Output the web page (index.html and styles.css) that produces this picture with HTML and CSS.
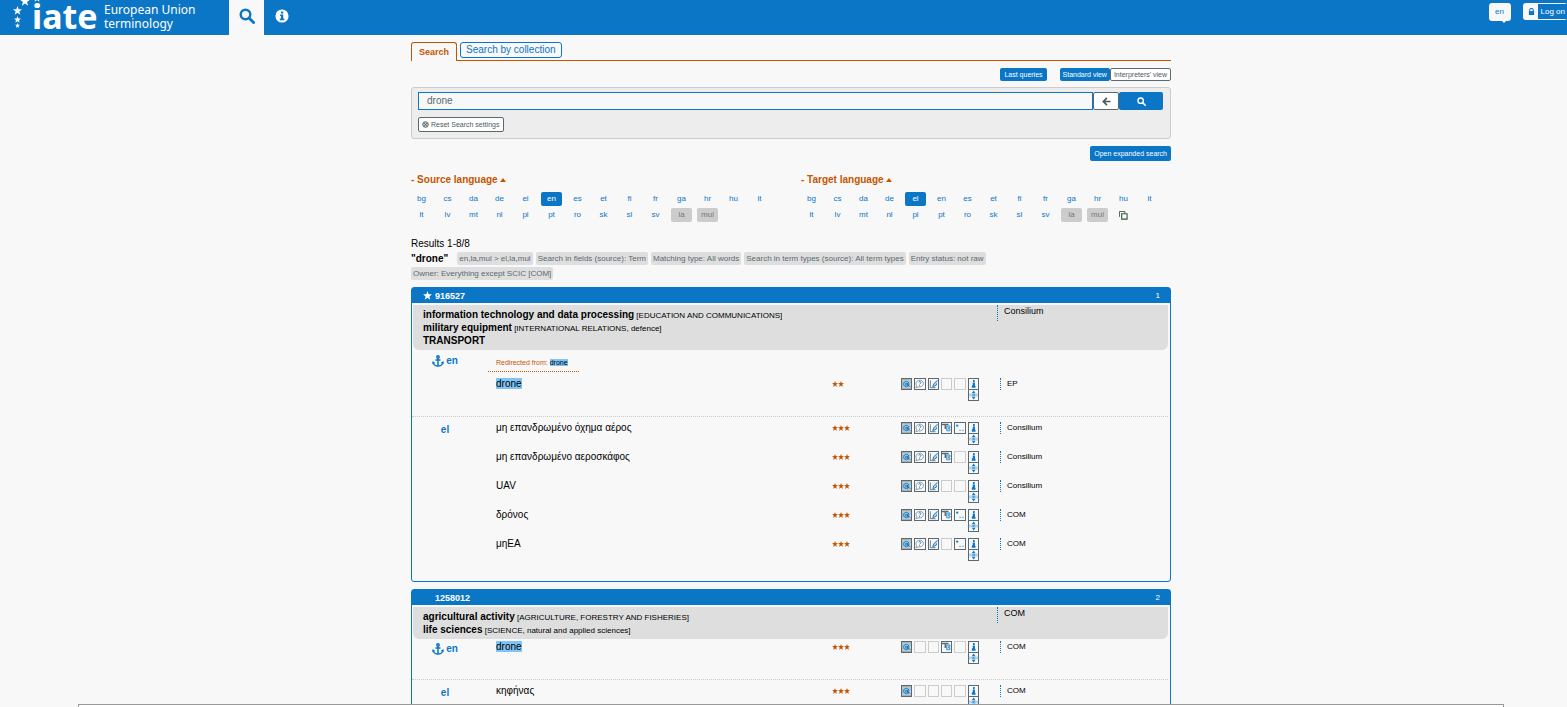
FILE: index.html
```html
<!DOCTYPE html>
<html lang="en">
<head>
  <meta charset="UTF-8">
  <title>IATE - European Union Terminology</title>
  <link rel="stylesheet" href="styles.css">
</head>
<body>
  <svg class="defs" aria-hidden="true">
    <symbol id="search" viewBox="0 0 16 16"><circle cx="6.5" cy="6.5" r="4.8" fill="none" stroke="currentColor" stroke-width="2.4"/><path d="M10 10l4.6 4.6" stroke="currentColor" stroke-width="2.8" stroke-linecap="round"/></symbol>
    <symbol id="star" viewBox="0 0 10 10"><path d="M5 0l1.3 3.5L10 3.7 7.1 6 8.1 9.8 5 7.6 1.9 9.8 2.9 6 0 3.7l3.7-.2z" fill="currentColor"/></symbol>
    <symbol id="anchor" viewBox="0 0 12 12"><g fill="none" stroke="currentColor" stroke-width="1.5"><circle cx="6" cy="2" r="1.2"/><path d="M6 3.3V11M3.5 5h5M1.3 7.5C1.6 9.8 3.6 11 6 11s4.4-1.2 4.7-3.5"/></g><path d="M0 8.8L.7 6l2.5 1.9zM12 8.8L11.3 6 8.8 7.9z" fill="currentColor"/></symbol>
    <symbol id="def" viewBox="0 0 10 10"><path d="M0 0h10v10H0z" fill="#d3dade"/><path d="M0 .5h10M0 9.5h10M0 3h2M0 5h2M0 7h2M8 3h2M7 7.5h3" stroke="#8a9599"/><circle cx="4.7" cy="5" r="2.9" fill="#b6d8ee" stroke="#0b76c6"/><path d="M4 4.2h2v2H4zM6 4v2.5h2" fill="none" stroke="#0b76c6"/></symbol>
    <symbol id="context" viewBox="0 0 10 10"><path d="M1 9l.7-2.5A4 3.6 0 1 1 4 8z" fill="#fff" stroke="#8a9599"/><path d="M4 3.5C4 2 6.5 2 6.3 3.6 6.2 4.6 5 4.5 5 5.5M5 6.3v1" fill="none" stroke="#0b76c6"/></symbol>
    <symbol id="note" viewBox="0 0 10 10"><path d="M1.5 1v8H7" fill="none" stroke="#8a9599" stroke-width="1.3"/><path d="M4 8l1-3 3.5-4 .8 1L8 6z" fill="#b6d8ee"/><path d="M4 8l1-3 4-4M4.5 8L8 6V4.5" fill="none" stroke="#0b76c6"/></symbol>
    <symbol id="tref" viewBox="0 0 10 10"><path d="M0 1.2h7M3.5 1.5V6" stroke="#5a6a70" stroke-width="1.5"/><path d="M5 2.8h3.5v2L6.5 5.2l2 .8v2H5z" fill="#b6d8ee" stroke="#3b93d2"/></symbol>
    <symbol id="usage" viewBox="0 0 10 10"><path d="M1 1.5h2.5v2H1.5z" fill="#0b76c6"/><path d="M4.5 7.5h2M7.5 7.5h2" stroke="#5aa3d8"/></symbol>
    <symbol id="info" viewBox="0 0 10 10"><path d="M4.3 .8h1.8v2H4.3zM4 3.3h2.4V7H7v2H3V7l1-.8z" fill="#0b76c6"/></symbol>
    <symbol id="expand" viewBox="0 0 10 10"><path d="M0 5h10" stroke="#b6d8ee" stroke-width="3"/><path d="M5 .3L7 3H3zM5 9.7L3 7h4z" fill="#0b76c6"/><path d="M3.5 5h3" stroke="#3b93d2" stroke-width="1.5"/></symbol>
  </svg>

  <header class="topbar">
    <a class="logo" href="#">
      <svg class="logo-stars" viewBox="0 0 30 30" aria-hidden="true">
        <use href="#star" x="7" y="-4" width="10" height="10"/>
        <use href="#star" x="20" y="-6" width="8" height="8"/>
        <use href="#star" x="0" y="6" width="9" height="9"/>
        <use href="#star" x="1" y="16" width="7" height="7"/>
        <use href="#star" x="2" y="23" width="5" height="5"/>
      </svg>
      <span class="logo-name">iate</span>
      <span class="logo-text">European Union<br>terminology</span>
    </a>
    <nav class="topnav">
      <a class="active" href="#" aria-label="Search"><svg><use href="#search"/></svg></a>
      <a href="#" aria-label="Information"><svg viewBox="0 0 16 16"><circle cx="8" cy="8" r="7.5" fill="currentColor"/><path d="M6.8 2.8h2.6v2.3H6.8zM5.8 6.2h3.6v4.7h1.2v2H5.6v-2h1.2V8h-1z" fill="#0b76c6"/></svg></a>
    </nav>
    <div class="account">
      <button class="lang-bubble">en</button>
      <button class="logon"><svg viewBox="0 0 8 8" aria-hidden="true"><path d="M2 4V2.5a2 2 0 0 1 4 0V4" fill="none" stroke="currentColor" stroke-width="1.2"/><path d="M1 3.5h6V8H1z" fill="currentColor"/></svg><span>Log on</span></button>
    </div>
  </header>

  <main class="page">
    <nav class="tabs">
      <a class="tab current" href="#">Search</a>
      <a class="tab" href="#">Search by collection</a>
    </nav>

    <div class="views">
      <button class="btn">Last queries</button>
      <div class="switch">
        <button class="btn">Standard view</button>
        <button class="btn light">Interpreters' view</button>
      </div>
    </div>

    <form class="search-box">
      <div class="search-line">
        <input type="text" value="drone" aria-label="Search term">
        <button type="button" class="back" aria-label="Back"><svg viewBox="0 0 10 10"><path d="M9.5 5H2M5.5 1L1.5 5l4 4" fill="none" stroke="currentColor" stroke-width="1.9"/></svg></button>
        <button type="button" class="go" aria-label="Search"><svg><use href="#search"/></svg></button>
      </div>
      <button type="button" class="btn light reset"><svg viewBox="0 0 8 8" aria-hidden="true"><circle cx="4" cy="4" r="3.2" fill="#c3c9cb" stroke="currentColor"/><path d="M2.5 2.5l3 3M5.5 2.5l-3 3" stroke="currentColor"/></svg>Reset Search settings</button>
    </form>

    <div class="expanded">
      <button class="btn">Open expanded search</button>
    </div>

    <div class="languages">
      <section>
        <h2>- Source language <span class="caret"></span></h2>
        <div class="lang-list">
          <button>bg</button><button>cs</button><button>da</button><button>de</button><button>el</button><button class="on">en</button><button>es</button><button>et</button><button>fi</button><button>fr</button><button>ga</button><button>hr</button><button>hu</button><button>it</button>
          <button>lt</button><button>lv</button><button>mt</button><button>nl</button><button>pl</button><button>pt</button><button>ro</button><button>sk</button><button>sl</button><button>sv</button><button class="off">la</button><button class="off">mul</button>
        </div>
      </section>
      <section>
        <h2>- Target language <span class="caret"></span></h2>
        <div class="lang-list">
          <button>bg</button><button>cs</button><button>da</button><button>de</button><button class="on">el</button><button>en</button><button>es</button><button>et</button><button>fi</button><button>fr</button><button>ga</button><button>hr</button><button>hu</button><button>it</button>
          <button>lt</button><button>lv</button><button>mt</button><button>nl</button><button>pl</button><button>pt</button><button>ro</button><button>sk</button><button>sl</button><button>sv</button><button class="off">la</button><button class="off">mul</button>
          <button aria-label="Copy languages"><svg class="copy" viewBox="0 0 10 10"><path d="M.5 6.5v-6h6v2" fill="none" stroke="#2c5a3c"/><path d="M3 3h6v6H3z" fill="#f8f8f8" stroke="#2c5a3c" stroke-width="1.2"/></svg></button>
        </div>
      </section>
    </div>

    <div class="summary">
      <p>Results 1-8/8</p>
      <div class="chips">
        <strong>"drone"</strong>
        <span>en,la,mul &gt; el,la,mul</span>
        <span>Search in fields (source): Term</span>
        <span>Matching type: All words</span>
        <span>Search in term types (source): All term types</span>
        <span>Entry status: not raw</span>
        <span>Owner: Everything except SCIC [COM]</span>
      </div>
    </div>

    <article class="entry">
      <header class="entry-bar">
        <svg><use href="#star"/></svg>
        <a href="#">916527</a>
        <span class="num">1</span>
      </header>
      <div class="domains">
        <div>
          <p><b>information technology and data processing</b> [EDUCATION AND COMMUNICATIONS]</p>
          <p><b>military equipment</b> [INTERNATIONAL RELATIONS, defence]</p>
          <p><b>TRANSPORT</b></p>
        </div>
        <div class="owner">Consilium</div>
      </div>

      <section class="lang-block first">
        <div class="redirect">Redirected from: <mark>drone</mark></div>
        <div class="row">
          <div class="lang up"><svg><use href="#anchor"/></svg>en</div>
          <div class="term"><mark>drone</mark></div>
          <div class="stars"><svg><use href="#star"/></svg><svg><use href="#star"/></svg></div>
          <div class="tools"><i><svg><use href="#def"/></svg></i><i><svg><use href="#context"/></svg></i><i><svg><use href="#note"/></svg></i><i class="none"></i><i class="none"></i><i><svg><use href="#info"/></svg></i><i class="more"><svg><use href="#expand"/></svg></i></div>
          <div class="org">EP</div>
        </div>
      </section>

      <section class="lang-block">
        <div class="row">
          <div class="lang">el</div>
          <div class="term">μη επανδρωμένο όχημα αέρος</div>
          <div class="stars"><svg><use href="#star"/></svg><svg><use href="#star"/></svg><svg><use href="#star"/></svg></div>
          <div class="tools"><i><svg><use href="#def"/></svg></i><i><svg><use href="#context"/></svg></i><i><svg><use href="#note"/></svg></i><i><svg><use href="#tref"/></svg></i><i><svg><use href="#usage"/></svg></i><i><svg><use href="#info"/></svg></i><i class="more"><svg><use href="#expand"/></svg></i></div>
          <div class="org">Consilium</div>
        </div>
        <div class="row">
          <div class="lang"></div>
          <div class="term">μη επανδρωμένο αεροσκάφος</div>
          <div class="stars"><svg><use href="#star"/></svg><svg><use href="#star"/></svg><svg><use href="#star"/></svg></div>
          <div class="tools"><i><svg><use href="#def"/></svg></i><i><svg><use href="#context"/></svg></i><i><svg><use href="#note"/></svg></i><i><svg><use href="#tref"/></svg></i><i class="none"></i><i><svg><use href="#info"/></svg></i><i class="more"><svg><use href="#expand"/></svg></i></div>
          <div class="org">Consilium</div>
        </div>
        <div class="row">
          <div class="lang"></div>
          <div class="term">UAV</div>
          <div class="stars"><svg><use href="#star"/></svg><svg><use href="#star"/></svg><svg><use href="#star"/></svg></div>
          <div class="tools"><i><svg><use href="#def"/></svg></i><i><svg><use href="#context"/></svg></i><i><svg><use href="#note"/></svg></i><i class="none"></i><i class="none"></i><i><svg><use href="#info"/></svg></i><i class="more"><svg><use href="#expand"/></svg></i></div>
          <div class="org">Consilium</div>
        </div>
        <div class="row">
          <div class="lang"></div>
          <div class="term">δρόνος</div>
          <div class="stars"><svg><use href="#star"/></svg><svg><use href="#star"/></svg><svg><use href="#star"/></svg></div>
          <div class="tools"><i><svg><use href="#def"/></svg></i><i><svg><use href="#context"/></svg></i><i><svg><use href="#note"/></svg></i><i><svg><use href="#tref"/></svg></i><i><svg><use href="#usage"/></svg></i><i><svg><use href="#info"/></svg></i><i class="more"><svg><use href="#expand"/></svg></i></div>
          <div class="org">COM</div>
        </div>
        <div class="row">
          <div class="lang"></div>
          <div class="term">μηΕΑ</div>
          <div class="stars"><svg><use href="#star"/></svg><svg><use href="#star"/></svg><svg><use href="#star"/></svg></div>
          <div class="tools"><i><svg><use href="#def"/></svg></i><i><svg><use href="#context"/></svg></i><i><svg><use href="#note"/></svg></i><i class="none"></i><i><svg><use href="#usage"/></svg></i><i><svg><use href="#info"/></svg></i><i class="more"><svg><use href="#expand"/></svg></i></div>
          <div class="org">COM</div>
        </div>
      </section>
    </article>

    <article class="entry">
      <header class="entry-bar">
        <svg></svg>
        <a href="#">1258012</a>
        <span class="num">2</span>
      </header>
      <div class="domains">
        <div>
          <p><b>agricultural activity</b> [AGRICULTURE, FORESTRY AND FISHERIES]</p>
          <p><b>life sciences</b> [SCIENCE, natural and applied sciences]</p>
        </div>
        <div class="owner">COM</div>
      </div>

      <section class="lang-block first">
        <div class="row">
          <div class="lang"><svg><use href="#anchor"/></svg>en</div>
          <div class="term"><mark>drone</mark></div>
          <div class="stars"><svg><use href="#star"/></svg><svg><use href="#star"/></svg><svg><use href="#star"/></svg></div>
          <div class="tools"><i><svg><use href="#def"/></svg></i><i class="none"></i><i class="none"></i><i><svg><use href="#tref"/></svg></i><i class="none"></i><i><svg><use href="#info"/></svg></i><i class="more"><svg><use href="#expand"/></svg></i></div>
          <div class="org">COM</div>
        </div>
      </section>

      <section class="lang-block">
        <div class="row">
          <div class="lang">el</div>
          <div class="term">κηφήνας</div>
          <div class="stars"><svg><use href="#star"/></svg><svg><use href="#star"/></svg><svg><use href="#star"/></svg></div>
          <div class="tools"><i><svg><use href="#def"/></svg></i><i class="none"></i><i class="none"></i><i class="none"></i><i class="none"></i><i><svg><use href="#info"/></svg></i><i class="more"><svg><use href="#expand"/></svg></i></div>
          <div class="org">COM</div>
        </div>
      </section>
    </article>
  </main>

  <div class="bottom-panel"></div>
</body>
</html>
```

FILE: styles.css
```css
* {
  box-sizing: border-box;
}

body {
  margin: 0;
  height: 100vh;
  overflow: hidden;
  background: #f8f8f8;
  color: #000;
  font-family: "Liberation Sans", Arial, sans-serif;
  font-size: 10px;
  line-height: 12px;
}

p, h2 {
  margin: 0;
}

a {
  color: inherit;
  text-decoration: none;
}

button {
  font: inherit;
  padding: 0;
  cursor: pointer;
}

mark {
  background: #80c4f5;
  color: inherit;
}

.defs {
  display: none;
}

/* top bar */
.topbar {
  display: flex;
  height: 35px;
  background: #0b76c6;
  color: #fff;
}

.logo {
  display: flex;
  width: 229px;
  padding-left: 13px;
}

.logo-stars {
  width: 30px;
  height: 30px;
  margin-right: -12px;
}

.logo-name {
  width: 73px;
  padding-left: 1px;
  font: bold 34px/32px "Noto Sans", sans-serif;
}

.logo-text {
  font: 12px/14px "Noto Sans", sans-serif;
  padding-top: 3px;
}

.topnav {
  display: flex;
}

.topnav a {
  display: flex;
  align-items: center;
  justify-content: center;
  width: 35px;
  padding-bottom: 4px;
}

.topnav svg {
  width: 14px;
  height: 14px;
}

.topnav .active {
  background: #f8f8f8;
  color: #0b76c6;
}

.topnav .active svg {
  width: 16px;
  height: 16px;
}

.account {
  display: flex;
  gap: 12px;
  margin-left: auto;
  padding-top: 3px;
  font-size: 8px;
}

.lang-bubble {
  position: relative;
  width: 22px;
  height: 18px;
  border: 0;
  border-radius: 3px;
  background: #f8f8f8;
  color: #0b76c6;
}

.lang-bubble::after {
  content: "";
  position: absolute;
  right: 4px;
  bottom: -2px;
  border: 3px solid transparent;
  border-top-color: #f8f8f8;
  border-bottom: 0;
}

.logon {
  display: flex;
  align-items: center;
  height: 17px;
  border: 1px solid #f8f8f8;
  border-right: 0;
  border-radius: 3px;
  background: #f8f8f8;
  color: #0b76c6;
}

.logon svg {
  width: 7px;
  height: 7px;
  margin: 0 3px 0 4px;
}

.logon span {
  padding: 0 2px 0 3px;
  line-height: 15px;
  background: #0b76c6;
  color: #fff;
}

/* page column */
.page {
  max-width: 775px;
  margin: 0 auto;
  padding: 7px 0 0 15px;
}

.tabs {
  display: flex;
  align-items: flex-start;
  gap: 3px;
  height: 19px;
  border-bottom: 1px solid #c45500;
}

.tab {
  height: 16px;
  padding: 0 5px;
  border: 1px solid #0b76c6;
  border-radius: 3px;
  color: #0b76c6;
  line-height: 14px;
}

.tab.current {
  height: 19px;
  padding: 0 7px;
  border-color: #c45500;
  border-bottom: 0;
  border-radius: 3px 3px 0 0;
  background: #f8f8f8;
  color: #c45500;
  font-size: 9px;
  font-weight: bold;
  line-height: 18px;
}

.views {
  display: flex;
  justify-content: flex-end;
  gap: 13px;
  padding: 7px 0 6px;
}

.switch {
  display: flex;
}

.btn {
  height: 13px;
  padding: 0 4px;
  border: 0;
  border-radius: 2px;
  background: #0b76c6;
  color: #fff;
  font-size: 7px;
}

.btn.light {
  border: 1px solid #5a6a70;
  background: #fff;
  color: #4c5a60;
}

.switch .btn {
  padding: 0 3px;
}

.search-box {
  padding: 4px 7px 6px 6px;
  border: 1px solid #ccc;
  border-radius: 3px;
  background: #ededed;
}

.search-line {
  display: flex;
  height: 18px;
  margin-bottom: 7px;
}

.search-line input {
  flex: 1;
  padding: 0 8px;
  border: 1px solid #0b76c6;
  background: #f8f8f8;
  color: #5a6a70;
  font: inherit;
}

.search-line button {
  display: flex;
  align-items: center;
  justify-content: center;
  border-radius: 2px;
}

.search-line svg {
  width: 9px;
  height: 9px;
}

.search-line .back {
  width: 26px;
  border: 1px solid #5a6a70;
  background: #fff;
  color: #4c5a60;
}

.search-line .go {
  width: 44px;
  border: 0;
  background: #0b76c6;
  color: #fff;
}

.btn.reset {
  display: flex;
  align-items: center;
  gap: 2px;
  height: 15px;
  padding: 0 4px 0 3px;
}

.reset svg {
  width: 7px;
  height: 7px;
}

.expanded {
  display: flex;
  justify-content: flex-end;
  padding: 7px 0 12px;
}

.expanded .btn {
  height: 15px;
}

/* languages */
.languages {
  display: grid;
  grid-template-columns: 1fr 1fr;
  gap: 20px;
}

.languages h2 {
  margin-bottom: 6px;
  color: #c45500;
  font-size: 10px;
  line-height: 13px;
}

.caret {
  display: inline-block;
  margin-bottom: 1px;
  border: 3px solid transparent;
  border-bottom: 4px solid #c45500;
  border-top: 0;
}

.lang-list {
  display: grid;
  grid-template-columns: repeat(14, 21px);
  gap: 2px 5px;
}

.lang-list button {
  height: 14px;
  border: 0;
  border-radius: 2px;
  background: none;
  color: #0b76c6;
  font-size: 8px;
}

.lang-list .on {
  background: #0b76c6;
  color: #fff;
}

.lang-list .off {
  background: #ccc;
  color: #777;
}

.copy {
  display: block;
  width: 9px;
  height: 9px;
  margin: 0 auto;
}

/* query summary */
.summary {
  padding: 16px 0 7px;
}

.chips {
  display: flex;
  flex-wrap: wrap;
  align-items: center;
  gap: 2px 3px;
  padding: 2px 100px 0 0;
}

.chips strong {
  margin-right: 6px;
}

.chips span {
  padding: 0 2px;
  border-radius: 2px;
  background: #dedede;
  color: #5a6a70;
  font-size: 8px;
  line-height: 13px;
}

/* result entries */
.entry {
  margin-bottom: 7px;
  padding-bottom: 5px;
  border: 1px solid #0b76c6;
  border-radius: 3px;
}

.entry-bar {
  display: flex;
  align-items: center;
  height: 15px;
  padding: 0 10px 0 11px;
  background: #0b76c6;
  color: #fff;
  font-size: 9px;
  font-weight: bold;
}

.entry-bar svg {
  width: 9px;
  height: 9px;
  margin-right: 3px;
}

.num {
  margin-left: auto;
  font-size: 8px;
  font-weight: normal;
}

.domains {
  display: grid;
  grid-template-columns: 584fr 171fr;
  margin: 2px 2px 0 1px;
  padding: 3px 0;
  border-radius: 0 0 6px 6px;
  background: #dedede;
  font-size: 8px;
  line-height: 13px;
}

.domains p {
  height: 13px;
  padding-left: 10px;
}

.domains b {
  font-size: 10px;
}

.owner {
  height: 16px;
  margin-top: -3px;
  padding-left: 6px;
  border-left: 1px dotted #0b76c6;
  font-size: 9px;
}

.lang-block {
  margin: 0 2px 0 0;
  padding: 5px 0 9px;
  border-top: 1px dotted #ccc;
}

.lang-block.first {
  padding-top: 2px;
  border-top: 0;
}

.redirect {
  width: 91px;
  height: 20px;
  margin: 0 0 6px 76px;
  padding: 5px 8px 0;
  border-bottom: 1px dotted #c45500;
  color: #c45500;
  font-size: 7px;
  white-space: nowrap;
}

.redirect mark {
  color: #000;
}

.row {
  display: grid;
  grid-template-columns: 84fr 336fr 69fr 99fr 168fr;
  height: 29px;
}

.lang {
  display: flex;
  justify-content: center;
  align-items: center;
  gap: 2px;
  height: 15px;
  padding-right: 18px;
  color: #0b76c6;
  font-weight: bold;
}

.lang.up {
  margin-top: -25px;
}

.lang svg {
  width: 12px;
  height: 12px;
}

.stars {
  display: flex;
  height: 12px;
  align-items: center;
  color: #c45500;
}

.stars svg {
  width: 6px;
  height: 6px;
}

.tools {
  display: grid;
  grid-template-columns: repeat(6, 1fr);
  column-gap: 2px;
  width: 78px;
  align-content: start;
}

.tools i {
  display: flex;
  height: 12px;
  border: 1px solid #5a6a70;
}

.tools svg {
  width: 100%;
  height: 100%;
}

.tools .none {
  border-color: #ccc;
}

.tools .more {
  grid-column: 6;
  margin-top: -1px;
}

.org {
  height: 12px;
  padding-left: 6px;
  border-left: 1px dotted #0b76c6;
  font-size: 8px;
}

/* panel docked to the bottom edge */
.bottom-panel {
  position: fixed;
  top: calc(100vh - 3px);
  left: 5%;
  width: 91%;
  height: 40px;
  border: 1px solid #999;
  background: #fff;
}
```
